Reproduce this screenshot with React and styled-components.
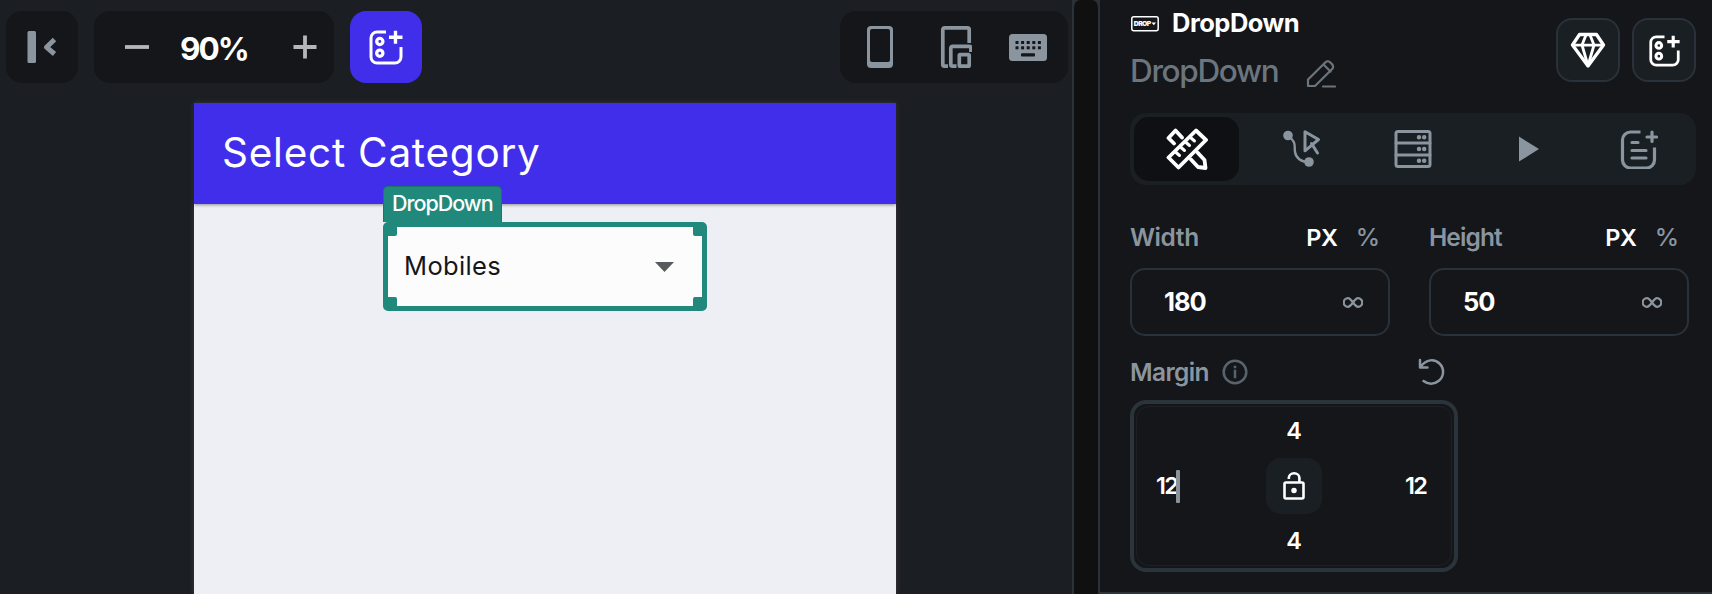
import React from "react";
import styled, { createGlobalStyle } from "styled-components";

const c = {
  canvas: "#1b1f24",
  panel: "#14161a",
  line: "#2b333b",
  muted: "#8a959f",
  dim: "#6b757e",
  raised: "#1a1f23",
  indigo: "#402eea",
  teal: "#21897b",
};

const GlobalStyle = createGlobalStyle`
  * { box-sizing: border-box; }
  body { margin: 0; background: ${c.canvas}; font-family: Inter, "Liberation Sans", sans-serif; overflow: hidden; }
  svg { display: block; flex: none; }
`;

const Page = styled.div`
  display: flex;
  width: 1712px;
  height: 594px;
  overflow: hidden;
`;

const Text = styled.span`
  font-size: ${(p) => p.$size}px;
  font-weight: ${(p) => p.$weight || 400};
  letter-spacing: ${(p) => p.$track || 0}px;
  color: ${(p) => p.$color || "#fff"};
  line-height: 1.2;
  white-space: nowrap;
`;

/* Canvas side */
const Workspace = styled.main`
  display: flex;
  flex-direction: column;
  width: 1072px;
  background: ${c.canvas};
`;

const Toolbar = styled.div`
  display: flex;
  gap: 16px;
  height: 103px;
  padding: 11px 4px 0 6px;
`;

const ToolButton = styled.div`
  display: flex;
  align-items: center;
  justify-content: center;
  width: 72px;
  height: 72px;
  border-radius: 16px;
  background: ${(p) => (p.$active ? c.indigo : c.panel)};
`;

const ZoomControl = styled.div`
  display: flex;
  align-items: center;
  gap: 31px;
  width: 240px;
  height: 72px;
  padding: 3px 17px 0 31px;
  border-radius: 16px;
  background: ${c.panel};

  svg { margin-top: -3px; }
  svg:last-child { margin-left: auto; }
`;

const DeviceControl = styled.div`
  display: flex;
  align-items: center;
  justify-content: space-between;
  width: 228px;
  height: 72px;
  margin-left: auto;
  padding: 0 21px 0 26px;
  border-radius: 16px;
  background: ${c.panel};

  svg:nth-child(2) { margin-left: 8px; }
`;

const Phone = styled.section`
  display: flex;
  flex-direction: column;
  align-items: center;
  width: 702px;
  height: 491px;
  margin-left: 194px;
  background: #eeeff4;
  box-shadow: 0 0 5px rgba(90, 80, 80, 0.6);
`;

const AppBar = styled.header`
  display: flex;
  align-items: center;
  width: 100%;
  height: 101px;
  padding: 0 0 1px 28px;
  background: ${c.indigo};
  box-shadow: 0 1px 3px rgba(0, 0, 0, 0.4);
`;

const Selected = styled.div`
  position: relative;
  display: flex;
  align-items: center;
  justify-content: space-between;
  width: 324px;
  height: 89px;
  margin-top: 18px;
  padding: 0 28px 0 16px;
  border: 5px solid ${c.teal};
  border-radius: 5px;
  background: #fcfcfd;
`;

const Tag = styled.div`
  position: absolute;
  left: -5px;
  top: -41px;
  display: flex;
  align-items: center;
  width: 119px;
  height: 36px;
  padding: 0 0 1px 8px;
  border: 1px solid #1d7569;
  border-bottom: 0;
  border-radius: 5px 5px 0 0;
  background: ${c.teal};
`;

const Handle = styled.i`
  position: absolute;
  width: 9px;
  height: 9px;
  background: ${c.teal};
  ${(p) => p.$v}: 0;
  ${(p) => p.$h}: 0;
  border-${(p) => (p.$v === "top" ? "bottom" : "top")}-${(p) => (p.$h === "left" ? "right" : "left")}-radius: 2px;
`;

const Divider = styled.div`
  width: 28px;
  background: #101010;
  border: solid #2a3239;
  border-width: 0 2px;
  border-radius: 8px 8px 0 0;
`;

const Gutter = styled.div`
  width: 28px;
  display: flex;
  background: #2a3239;
`;

/* Properties side */
const Panel = styled.aside`
  width: 612px;
  height: 594px;
  padding: 0 16px 0 30px;
  background: ${c.panel};
  border-bottom: 2px solid ${c.line};
`;

const PanelHeader = styled.header`
  display: flex;
  justify-content: space-between;
  height: 113px;
`;

const TitleRow = styled.div`
  display: flex;
  align-items: center;
  gap: 13px;
  height: 47px;
  padding-left: 1px;
`;

const NameRow = styled.div`
  display: flex;
  align-items: center;
  gap: 28px;
  height: 48px;

  svg { margin-top: 5px; }
`;

const Actions = styled.div`
  display: flex;
  gap: 12px;
  padding-top: 18px;
`;

const ActionButton = styled.div`
  display: flex;
  align-items: center;
  justify-content: center;
  width: 64px;
  height: 64px;
  border: 2px solid #29313a;
  border-radius: 16px;
  background: ${c.raised};
`;

const Tabs = styled.nav`
  display: flex;
  justify-content: space-between;
  height: 72px;
  padding: 4px;
  border-radius: 16px;
  background: ${c.raised};
`;

const Tab = styled.div`
  display: flex;
  align-items: center;
  justify-content: center;
  width: 105px;
  height: 64px;
  padding-bottom: 1px;
  padding-left: ${(p) => p.$before || 0}px;
  padding-right: ${(p) => p.$after || 0}px;
  border-radius: 15px;
  background: ${(p) => (p.$active ? "#0e1014" : "transparent")};
`;

const Fields = styled.div`
  display: flex;
  gap: 39px;
  margin-top: 35px;
`;

const Field = styled.div`
  width: 260px;
`;

const FieldLabel = styled.div`
  display: flex;
  align-items: center;
  height: 36px;
  padding-right: 10px;
`;

const Unit = styled(Text)`
  margin-left: ${(p) => (p.$first ? "auto" : "18px")};
`;

const Input = styled.div`
  display: flex;
  align-items: center;
  justify-content: space-between;
  height: 68px;
  margin-top: 12px;
  padding: 0 25px 0 32px;
  border: 2px solid #29313a;
  border-radius: 15px;
`;

const MarginLabel = styled.div`
  display: flex;
  align-items: center;
  gap: 13px;
  width: 328px;
  height: 36px;
  margin-top: 18px;
  padding-right: 13px;

  span { margin-top: 1px; }
  svg:last-child { margin-left: auto; }
`;

const MarginBox = styled.div`
  position: relative;
  display: grid;
  grid-template-columns: 1fr 56px 1fr;
  grid-template-rows: 54px 56px 54px;
  align-items: center;
  width: 328px;
  height: 172px;
  margin-top: 10px;
  border: 4px solid ${c.line};
  border-radius: 16px;

  &::after {
    content: "";
    position: absolute;
    inset: 2px;
    border: 1px solid #1d2126;
    border-radius: 13px;
  }
`;

const Side = styled.div`
  display: flex;
  align-items: center;
  justify-content: ${(p) => p.$align || "center"};
  padding: ${(p) => p.$pad || 0};
  grid-column: ${(p) => p.$col || 2};
`;

const Caret = styled.i`
  width: 4px;
  height: 33px;
  margin-left: -1px;
  background: #8a929c;
  border-radius: 1px;
`;

const LockButton = styled.div`
  display: flex;
  align-items: center;
  justify-content: center;
  width: 56px;
  height: 56px;
  border-radius: 15px;
  background: ${c.raised};
`;

/* Icons */
const stroke = (color, width) => ({
  fill: "none",
  stroke: color,
  strokeWidth: width,
  strokeLinecap: "round",
  strokeLinejoin: "round",
});

const CollapseIcon = () => (
  <svg width="30" height="34" viewBox="0 0 30 34">
    <rect x="0.5" y="1" width="8.5" height="32" rx="1.5" fill={c.muted} />
    <path d="M27.500 9.500 19.500 17.200 27.500 24" {...stroke(c.muted, 5)} strokeLinecap="butt" />
  </svg>
);

const MinusIcon = () => (
  <svg width="24" height="24" viewBox="0 0 24 24"><path d="M0 12h24" stroke="#b4b7ba" strokeWidth="3.800" /></svg>
);

const PlusIcon = () => (
  <svg width="24" height="24" viewBox="0 0 24 24"><path d="M0.500 12h23M12 0.500v23" stroke="#b4b7ba" strokeWidth="3.800" /></svg>
);

const AddComponentIcon = ({ size }) => (
  <svg width={size} height={size} viewBox="0 0 36 36">
    <g {...stroke("#fff", 3)} strokeLinecap="butt">
      <path d="M18 3H9a6 6 0 0 0-6 6v19a6 6 0 0 0 6 6h18a6 6 0 0 0 6-6V18" />
      <circle cx="11.800" cy="12.500" r="3.100" strokeWidth="3.300" />
      <circle cx="11.800" cy="24.200" r="3.100" strokeWidth="3.300" />
      <path d="M27.500 1.800v13M21 8.300h13.500" strokeWidth="3.400" />
    </g>
  </svg>
);

const PhoneIcon = () => (
  <svg width="28" height="44" viewBox="0 0 28 44">
    <path fillRule="evenodd" fill={c.muted} d="M5 1h18a4 4 0 0 1 4 4v34a4 4 0 0 1-4 4H5a4 4 0 0 1-4-4V5a4 4 0 0 1 4-4ZM6 4a2 2 0 0 0-2 2v29a2 2 0 0 0 2 2h16a2 2 0 0 0 2-2V6a2 2 0 0 0-2-2Z" />
  </svg>
);

const DevicesIcon = () => (
  <svg width="32" height="44" viewBox="0 0 32 44">
    <g {...stroke(c.muted, 3.7)} strokeLinecap="butt">
      <path d="M8 41.200H4.500a1.700 1.700 0 0 1-1.700-1.700V4.500a1.700 1.700 0 0 1 1.700-1.700h23a1.700 1.700 0 0 1 1.700 1.700V18" />
      <path d="M16.500 41.200h-4a1.700 1.700 0 0 1-1.700-1.700V23a1.700 1.700 0 0 1 1.700-1.700h16.700a1.700 1.700 0 0 1 1.700 1.700v4" />
      <rect x="19.300" y="29.700" width="9.900" height="11.500" rx="1" />
    </g>
  </svg>
);

const KeyboardIcon = () => (
  <svg width="38" height="27" viewBox="0 0 38 27">
    <rect width="38" height="27" rx="3.500" fill={c.muted} />
    {[6.5, 12.1, 17.7, 23.3, 28.9].map((x) => (
      <g key={x} fill={c.panel}>
        <rect x={x} y="7" width="3" height="3" />
        <rect x={x} y="12.300" width="3" height="3" />
      </g>
    ))}
    <rect x="12" y="19.200" width="14" height="3.400" rx="1" fill={c.panel} />
  </svg>
);

const DropIcon = () => (
  <svg width="28" height="16" viewBox="0 0 28 16">
    <rect x="0.800" y="0.800" width="26.400" height="14" rx="2" {...stroke("#fff", 1.5)} />
    <text x="2.800" y="10.400" fontSize="6.800" fontWeight="900" fill="#fff" textLength="17.500">DROP</text>
    <path d="M20.500 6.500h4.500L22.800 9.200z" fill="#fff" />
  </svg>
);

const PencilIcon = () => (
  <svg width="30" height="30" viewBox="0 0 30 30" {...stroke(c.dim, 2.2)}>
    <path d="M2 27v-6.500L19.500 3.200a3.200 3.200 0 0 1 4.500 0l2.200 2.200a3.200 3.200 0 0 1 0 4.500L9 27Z" />
    <path d="m17.500 5.500 7 7M17 27.500h12" />
  </svg>
);

const GemIcon = () => (
  <svg width="36" height="36" viewBox="0 0 36 36" {...stroke("#fff", 3.3)}>
    <path d="M9.500 2.500h17L33.500 13 18 34 2.500 13Z" />
    <path d="M3 13.200h30M16 3l-4 10 5.500 19M20 3l4 10-5.500 19" strokeWidth="2.800" />
  </svg>
);

const DesignIcon = () => (
  <svg width="42" height="42" viewBox="0 0 42 42" {...stroke("#fff", 3.8)}>
    <path d="M8 15.500 2.500 10l7-7.500 6.500 7" />
    <path d="m25 31.500 7 7.500 7.500 1-1-8-7-7.500" />
    <path d="M2.500 29.500 30 2.500l10 9.500-27.500 27.500Z" fill="#0e1014" />
    <path d="m9.500 24 4 3.500M14.500 19l4 3.500M19.500 14l4 3.500M24.500 9.500l4 3.500" strokeWidth="3" />
  </svg>
);

const ActionsIcon = () => (
  <svg width="40" height="40" viewBox="0 0 40 40">
    <circle cx="6" cy="6.500" r="4.800" fill={c.muted} />
    <circle cx="27" cy="33" r="4.800" fill={c.muted} />
    <path d="M6 7c9 6 6 10 7 16s6 10 13 10" {...stroke(c.muted, 2.4)} />
    <path d="M23 2.800v19L36.500 10.500Z" {...stroke(c.muted, 3)} />
    <path d="m29.500 14.500 6 9.500" {...stroke(c.muted, 3)} />
  </svg>
);

const BackendIcon = () => (
  <svg width="38" height="40" viewBox="0 0 38 40" {...stroke(c.muted, 3)}>
    <rect x="2" y="2.500" width="34" height="35" rx="2" />
    <path d="M2 14h34M2 26h34" />
    {[8.300, 20, 31.800].map((y) => (
      <g key={y} strokeWidth="1.500">
        <circle cx="25" cy={y} r="1.500" fill={c.muted} />
        <circle cx="30.200" cy={y} r="1.500" fill={c.muted} />
      </g>
    ))}
  </svg>
);

const PlayIcon = () => (
  <svg width="26" height="26" viewBox="0 0 26 26"><path d="M6 0.500v25l20-12.500z" fill={c.muted} /></svg>
);

const NoteAddIcon = () => (
  <svg width="38" height="40" viewBox="0 0 38 40" {...stroke(c.muted, 3.2)}>
    <path d="M20.500 3H10.500a8 8 0 0 0-8 8v20a8 8 0 0 0 8 8h16a8 8 0 0 0 8-8V18.500" strokeLinecap="butt" />
    <path d="M12 13.500h6M12 21.500h14M12 29h14M32 3v9.500M27 8h9.500" />
  </svg>
);

const InfoIcon = () => (
  <svg width="26" height="26" viewBox="0 0 26 26" {...stroke("#59636c", 2.5)}>
    <circle cx="13" cy="13" r="11.300" />
    <path d="M13 12v6M13 8v.1" strokeLinecap="square" />
  </svg>
);

const ResetIcon = () => (
  <svg width="27" height="28" viewBox="0 0 27 28" {...stroke(c.muted, 2.5)}>
    <path d="M2 2v7.500h7.500M2.500 9C8 1 16.500 0.500 21.500 5.500a11.500 11.500 0 0 1-1 17.500c-4.500 3.800-10.500 3.500-15 0" />
  </svg>
);

const InfinityIcon = () => (
  <svg width="20" height="11" viewBox="0 0 20 11" {...stroke(c.muted, 2.3)}>
    <path d="M10 5.500C7.500 2 6.500 1.200 5 1.200a4 4 0 0 0 0 8.600c1.500 0 2.500-.8 5-4.300s3.500-4.300 5-4.300a4 4 0 0 1 0 8.600c-1.500 0-2.500-.8-5-4.300Z" />
  </svg>
);

const LockIcon = () => (
  <svg width="22" height="28" viewBox="0 0 22 28" {...stroke("#fff", 2.6)}>
    <rect x="1.500" y="10.500" width="19" height="16" rx="1.500" />
    <path d="M5.800 7V6a5.300 4.700 0 0 1 10.600 0v4" strokeLinecap="butt" />
    <circle cx="11" cy="18.500" r="2" fill="#fff" strokeWidth="1.500" />
  </svg>
);

const ArrowIcon = () => (
  <svg width="19" height="10" viewBox="0 0 19 10"><path d="M0 0h19L9.500 10z" fill="#58595c" /></svg>
);

const SizeField = ({ label, value, track }) => (
  <Field>
    <FieldLabel>
      <Text $size={24.500} $weight={600} $track={track} $color={c.muted}>{label}</Text>
      <Unit $first $size={23.500} $weight={600} $track={-0.3}>PX</Unit>
      <Unit $size={24.500} $weight={500} $track={0} $color={c.muted}>%</Unit>
    </FieldLabel>
    <Input>
      <Text $size={25.500} $weight={700} $track={-1}>{value}</Text>
      <InfinityIcon />
    </Input>
  </Field>
);

export default function App() {
  return (
    <Page>
      <GlobalStyle />
      <Workspace>
        <Toolbar>
          <ToolButton><CollapseIcon /></ToolButton>
          <ZoomControl>
            <MinusIcon />
            <Text $size={31.500} $weight={700} $track={-2}>90%</Text>
            <PlusIcon />
          </ZoomControl>
          <ToolButton $active><AddComponentIcon size={36} /></ToolButton>
          <DeviceControl>
            <PhoneIcon />
            <DevicesIcon />
            <KeyboardIcon />
          </DeviceControl>
        </Toolbar>
        <Phone>
          <AppBar><Text $size={40.5} $track={0.75}>Select Category</Text></AppBar>
          <Selected>
            <Tag><Text $size={21.500} $weight={500} $track={-1}>DropDown</Text></Tag>
            <Handle $v="top" $h="left" />
            <Handle $v="top" $h="right" />
            <Handle $v="bottom" $h="left" />
            <Handle $v="bottom" $h="right" />
            <Text $size={25.500} $track={0.35} $color="#15161a">Mobiles</Text>
            <ArrowIcon />
          </Selected>
        </Phone>
      </Workspace>
      <Gutter><Divider /></Gutter>
      <Panel>
        <PanelHeader>
          <div>
            <TitleRow>
              <DropIcon />
              <Text $size={25.500} $weight={700} $track={-0.500}>DropDown</Text>
            </TitleRow>
            <NameRow>
              <Text $size={31.500} $weight={500} $track={-1.35} $color={c.dim}>DropDown</Text>
              <PencilIcon />
            </NameRow>
          </div>
          <Actions>
            <ActionButton><GemIcon /></ActionButton>
            <ActionButton><AddComponentIcon size={33} /></ActionButton>
          </Actions>
        </PanelHeader>
        <Tabs>
          <Tab $active><DesignIcon /></Tab>
          <Tab $before={4}><ActionsIcon /></Tab>
          <Tab><BackendIcon /></Tab>
          <Tab><PlayIcon /></Tab>
          <Tab $after={2}><NoteAddIcon /></Tab>
        </Tabs>
        <Fields>
          <SizeField label="Width" value="180" track={-0.4} />
          <SizeField label="Height" value="50" track={-0.9} />
        </Fields>
        <MarginLabel>
          <Text $size={24.500} $weight={600} $track={-0.6} $color={c.muted}>Margin</Text>
          <InfoIcon />
          <ResetIcon />
        </MarginLabel>
        <MarginBox>
          <Side><Text $size={23.500} $weight={600}>4</Text></Side>
          <Side $col={1} $align="flex-start" $pad="0 0 0 22px">
            <Text $size={23.500} $weight={600} $track={-1.8}>12</Text>
            <Caret />
          </Side>
          <LockButton><LockIcon /></LockButton>
          <Side $col={3} $align="flex-end" $pad="0 28px 0 0">
            <Text $size={23.500} $weight={600} $track={-1.8}>12</Text>
          </Side>
          <Side><Text $size={23.500} $weight={600}>4</Text></Side>
        </MarginBox>
      </Panel>
    </Page>
  );
}
